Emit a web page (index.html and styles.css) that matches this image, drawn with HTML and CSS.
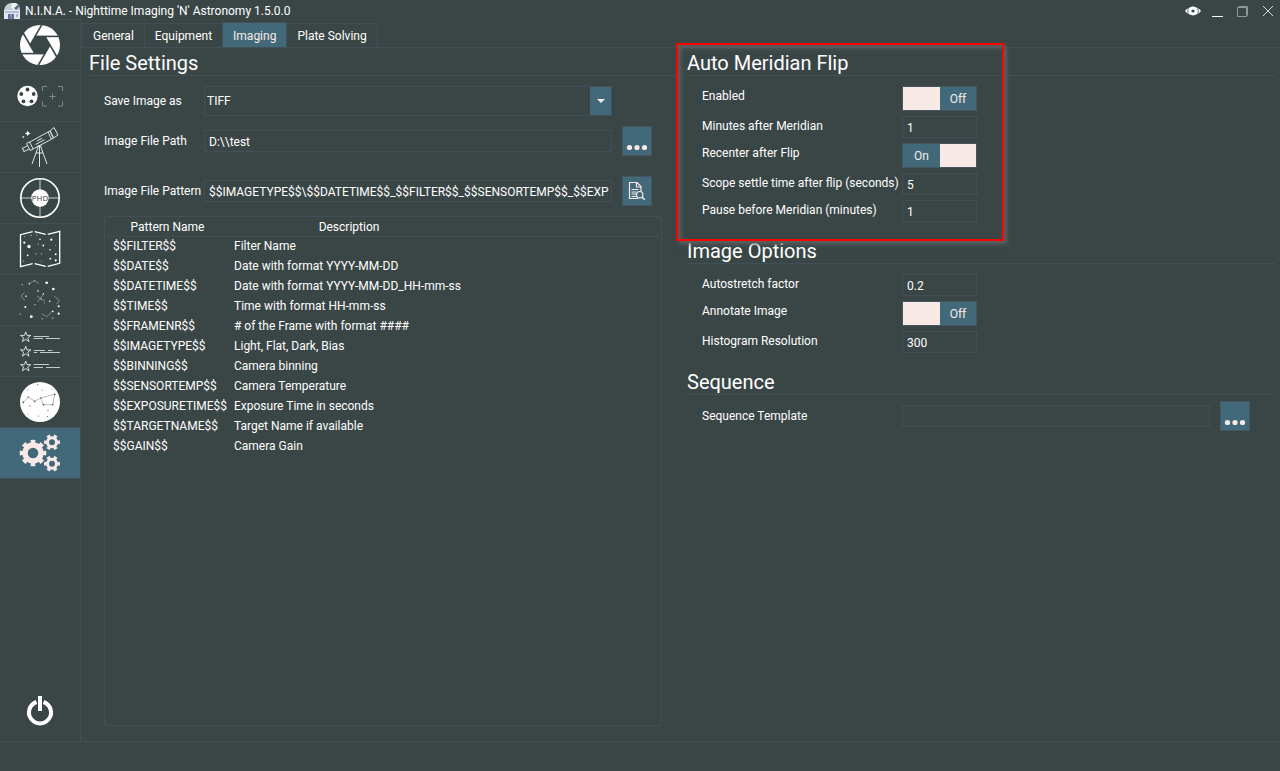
FILE: index.html
```html
<!DOCTYPE html>
<html lang="en">
<head>
<meta charset="utf-8">
<title>N.I.N.A. - Nighttime Imaging 'N' Astronomy 1.5.0.0</title>
<link rel="stylesheet" href="styles.css">
</head>
<body>
<header class="titlebar">
  <svg class="app-icon" viewBox="0 0 18 18" aria-hidden="true">
    <path d="M1 8Q2 2 8 1h5q4 2 4 7z" fill="#c3ced3"/>
    <path d="M9 1l4 0 3 4-5 3-3-3z" fill="#eef3f5"/>
    <path d="M11 6l5-4 1 2-4 4z" fill="#5b6f83"/>
    <path d="M1 8h16v10H1z" fill="#e6e5f2"/>
    <path d="M2 9h14v2H2z" fill="#b7bfd2"/>
    <path d="M5 12h6v6H5z" fill="#5e6f9c"/>
    <path d="M8 12v6" stroke="#9aa7ca"/>
    <path d="M13 12h2v3h-2z" fill="#a9b0d2"/>
  </svg>
  <h1 class="app-title">N.I.N.A. - Nighttime Imaging 'N' Astronomy 1.5.0.0</h1>
  <div class="window-buttons">
    <button class="window-button" aria-label="Toggle theme">
      <svg viewBox="0 0 16 16"><path d="M0 8q3-4 8-4t8 4q-3 4-8 4T0 8z" fill="#fff"/><circle cx="8" cy="8" r="4.4" fill="#fff"/><circle cx="8" cy="8" r="1.6" fill="#3a4646"/><path d="M3.4 5.4q-1.6 2.6 0 5.2M12.6 5.4q1.6 2.6 0 5.2" fill="none" stroke="#3a4646" stroke-width=".8"/></svg>
    </button>
    <button class="window-button" aria-label="Minimize">
      <svg viewBox="0 0 16 16"><path d="M2 13.500h11" stroke="#fff" fill="none"/></svg>
    </button>
    <button class="window-button" aria-label="Restore">
      <svg viewBox="0 0 16 16"><path d="M2.500 4.500h9v9h-9zM3.500 3.500h9v9" fill="none" stroke="#8f9898"/></svg>
    </button>
    <button class="window-button" aria-label="Close">
      <svg viewBox="0 0 16 16"><path d="M3 3l10 10M13 3L3 13" fill="none" stroke="#d4d8d8"/></svg>
    </button>
  </div>
</header>

<div class="shell">
  <nav class="sidebar" aria-label="Sections">
    <button class="side-item" aria-label="Camera">
      <svg viewBox="0 0 80 50">
        <defs><path id="blade" d="M-5-8.600H20" stroke="#3a4646" stroke-width="1.600"/></defs>
        <g transform="translate(40 25)">
          <circle r="20" fill="#fff"/>
          <path d="M-5-8.600H5L10 0 5 8.600H-5L-10 0z" fill="#3a4646"/>
          <use href="#blade"/><use href="#blade" transform="rotate(60)"/><use href="#blade" transform="rotate(120)"/>
          <use href="#blade" transform="rotate(180)"/><use href="#blade" transform="rotate(240)"/><use href="#blade" transform="rotate(300)"/>
        </g>
      </svg>
    </button>
    <button class="side-item" aria-label="Filter wheel and focuser">
      <svg viewBox="0 0 80 50">
        <circle cx="27.500" cy="25" r="10.200" fill="#fff"/>
        <g fill="#3a4646"><circle cx="27.500" cy="18.500" r="1.900"/><circle cx="33.700" cy="23" r="1.900"/><circle cx="31.500" cy="30.300" r="1.900"/><circle cx="23.500" cy="30.300" r="1.900"/><circle cx="21.300" cy="23" r="1.900"/></g>
        <path d="M42.500 20v-4.500h4.500M58 15.500h4.500V20M62.500 30.500V35H58M47 35h-4.500v-4.500M49.500 25.500h6M52.500 22.500v6" fill="none" stroke="#818b8b"/>
      </svg>
    </button>
    <button class="side-item" aria-label="Telescope">
      <svg viewBox="0 0 80 50">
        <g fill="none" stroke="#dfe3e3" stroke-width="1">
          <path d="M50 9l4-3.500 4 7.500-4.500 3zM48 10l2-1 3.500 7-2 1.200zM29 20.500L48 10M33 27l18.500-9.800M26.500 21.500l3-1.500 3.700 7-3 1.500zM22.500 26.500l5-3M24 29.500l5.200-2.500M22 25.500l2.300 4.500M37 19l5-2.700M35.500 22.500l9-4.800"/>
          <path d="M38.500 24L32 42M40.500 24L47 42M39.500 24v21M36 31h7M37.500 24h4"/>
        </g>
        <path d="M27.700 8.500l.9 2 2 .9-2 .9-.9 2-.9-2-2-.9 2-.9z" fill="#fff"/><circle cx="23.300" cy="15" r="1" fill="#cdd2d2"/>
      </svg>
    </button>
    <button class="side-item" aria-label="Guider">
      <svg viewBox="0 0 80 50">
        <path d="M20 25h40M40 5v40" stroke="#9aa3a3" stroke-width="1.500"/>
        <circle cx="40" cy="25" r="19.200" fill="none" stroke="#fff" stroke-width="1.600"/>
        <circle cx="40" cy="25" r="8.700" fill="#fff"/>
        <text class="phd" x="40" y="28" text-anchor="middle">PHD</text>
      </svg>
    </button>
    <button class="side-item" aria-label="Sky atlas">
      <svg viewBox="0 0 80 50">
        <path d="M32.700 7.600L20.500 10.700v32l12.200-3.100M34.700 7.600l11 2.800M47.700 10.400l12-3.100v32l-12 3.100M45.700 42.400l-11-2.800" fill="none" stroke="#fff" stroke-width="1.300"/>
        <g fill="#fff"><circle cx="24.300" cy="18.700" r="1.100"/><circle cx="29" cy="22.500" r="1.700"/><circle cx="51.300" cy="15.700" r="1.100"/><circle cx="40" cy="15.300" r=".8"/><circle cx="43.300" cy="21.500" r=".9"/><circle cx="50" cy="25.700" r=".8"/><circle cx="27.700" cy="31.300" r=".9"/><circle cx="55.700" cy="30.300" r="1"/><circle cx="55.700" cy="36.300" r="1.100"/><circle cx="50.300" cy="34.700" r=".9"/></g>
        <g fill="#9ba4a4"><circle cx="55.700" cy="21.300" r=".6"/><circle cx="31" cy="11.500" r=".8"/><circle cx="36.700" cy="11" r=".7"/><circle cx="36" cy="29.700" r=".7"/><circle cx="41.500" cy="29.700" r=".7"/><circle cx="41.500" cy="37" r=".6"/><circle cx="38.300" cy="20.300" r=".7"/><circle cx="23.500" cy="37.300" r=".7"/><circle cx="24.500" cy="12.500" r=".6"/></g>
      </svg>
    </button>
    <button class="side-item" aria-label="Framing">
      <svg viewBox="0 0 80 50">
        <path d="M29.300 8.700l5-3 5 3M24.300 17.700L21 21l4 4.700M36.700 21l8.300 5.300M43.300 19.700L37.300 27M54.300 21.300l5 4-2.600 4M41.700 38.700l5 3 5-4.700" fill="none" stroke="#8f9999" stroke-width=".8"/>
        <g fill="#fff"><circle cx="29.300" cy="8.700" r=".8"/><circle cx="46.700" cy="7.700" r="1.300"/><circle cx="53.300" cy="14" r="1.300"/><circle cx="38" cy="16" r=".8"/><circle cx="43.300" cy="19" r=".8"/><circle cx="26" cy="21.300" r=".8"/><circle cx="49.700" cy="26.300" r=".8"/><circle cx="25.300" cy="32" r="1"/><circle cx="58.700" cy="31.200" r="1"/><circle cx="58.700" cy="38.700" r="1.100"/><circle cx="52.700" cy="36.300" r=".9"/><circle cx="31.300" cy="41.700" r="1.400"/></g>
        <g fill="#a9b1b1"><circle cx="22.300" cy="9.700" r=".7"/><circle cx="35" cy="29.700" r=".8"/><circle cx="20.300" cy="39.300" r=".7"/><circle cx="52.700" cy="43.300" r=".8"/><circle cx="42.300" cy="43.700" r=".7"/><circle cx="34.500" cy="5.700" r=".7"/><circle cx="41" cy="24" r=".8"/><circle cx="44.500" cy="28" r=".6"/></g>
      </svg>
    </button>
    <button class="side-item" aria-label="Sequence">
      <svg viewBox="0 0 80 50">
        <defs><path id="star" d="M0-5.200L1.300-1.600H5.200L2.100.7 3.300 4.600 0 2.300-3.300 4.600-2.100.7-5.200-1.600h3.900z" fill="none" stroke="#e6e9e9" stroke-width=".9"/></defs>
        <use href="#star" x="25.700" y="11"/><use href="#star" x="25.700" y="25.500"/><use href="#star" x="25.700" y="40.200"/>
        <path d="M33.700 10.500H49M33.700 12.500H43M46 12.500H60M33.700 24.500H45M48 24.500h4.500M33.700 26.500h3.500M40 26.500H60M33.700 38.500H49M33.700 41.500H43M46 41.500H60" stroke="#d5dada" stroke-width=".9"/>
      </svg>
    </button>
    <button class="side-item" aria-label="Sky">
      <svg viewBox="0 0 80 50">
        <circle cx="40" cy="25" r="20" fill="#fff"/>
        <path d="M23.300 25.300l5-5.300 6.400 4.300 6-3.300 14-3.700-2 10.400h-9.400l-2.600-6.700" fill="none" stroke="#9aa0a0" stroke-width=".7"/>
        <g fill="#5a6464"><circle cx="23.300" cy="25.300" r=".9"/><circle cx="28.300" cy="20" r=".7"/><circle cx="34.700" cy="24.300" r=".9"/><circle cx="40.700" cy="21" r=".8"/><circle cx="54.700" cy="17.300" r=".9"/><circle cx="52.700" cy="27.700" r=".8"/><circle cx="43.500" cy="27.700" r=".9"/><circle cx="37.700" cy="7.700" r=".6"/><circle cx="38.300" cy="39" r=".6"/><circle cx="47.500" cy="39.500" r=".6"/></g>
        <g fill="#adb3b3"><circle cx="27.500" cy="13" r=".7"/><circle cx="42.500" cy="13.300" r=".8"/><circle cx="30" cy="29" r=".9"/><circle cx="48" cy="33.500" r=".9"/><circle cx="28" cy="37.300" r=".7"/><circle cx="52" cy="12.500" r=".6"/></g>
      </svg>
    </button>
    <button class="side-item side-item-active" aria-label="Options" aria-current="page">
      <svg viewBox="0 0 80 50">
        <g fill="none" stroke="#f8e9e7">
          <circle cx="33" cy="25" r="8" stroke-width="5.400"/>
          <circle cx="33" cy="25" r="11.500" stroke-width="3.600" pathLength="80" stroke-dasharray="5 5" stroke-dashoffset="2.500"/>
          <circle cx="52" cy="14.300" r="4.500" stroke-width="3"/>
          <circle cx="52" cy="14.300" r="6.600" stroke-width="2.800" pathLength="60" stroke-dasharray="5 5" stroke-dashoffset="2.500"/>
          <circle cx="52" cy="35.700" r="4.500" stroke-width="3"/>
          <circle cx="52" cy="35.700" r="6.600" stroke-width="2.800" pathLength="60" stroke-dasharray="5 5" stroke-dashoffset="2.500"/>
        </g>
      </svg>
    </button>
    <button class="power" aria-label="Exit">
      <svg viewBox="0 0 80 50">
        <path d="M36.500 15a11 11 0 1 0 7 0" fill="none" stroke="#fff" stroke-width="4"/>
        <path d="M40 9v15" stroke="#fff" stroke-width="4"/>
      </svg>
    </button>
  </nav>

  <main class="main">
    <div class="tabs" role="tablist">
      <button class="tab" role="tab">General</button>
      <button class="tab" role="tab">Equipment</button>
      <button class="tab tab-active" role="tab" aria-selected="true">Imaging</button>
      <button class="tab" role="tab">Plate Solving</button>
    </div>

    <div class="columns">
      <section class="column">
        <h2 class="heading">File Settings</h2>
        <div class="file-settings">
          <div class="file-row">
            <label for="save-as">Save Image as</label>
            <div class="combo">
              <select id="save-as"><option>TIFF</option><option>FITS</option><option>XISF</option></select>
              <span class="combo-arrow" aria-hidden="true"></span>
            </div>
          </div>
          <div class="file-row">
            <label for="file-path">Image File Path</label>
            <input class="field" id="file-path" type="text" value="D:\\test">
            <button class="icon-button" aria-label="Browse image path">
              <svg viewBox="0 0 28 28"><g fill="#f8e9e7"><circle cx="6.500" cy="20.500" r="2.600"/><circle cx="14" cy="20.500" r="2.600"/><circle cx="21.500" cy="20.500" r="2.600"/></g></svg>
            </button>
          </div>
          <div class="file-row file-row-spaced">
            <label for="file-pattern">Image File Pattern</label>
            <input class="field" id="file-pattern" type="text" value="$$IMAGETYPE$$\$$DATETIME$$_$$FILTER$$_$$SENSORTEMP$$_$$EXPOSURETIME$$">
            <button class="icon-button" aria-label="Preview pattern">
              <svg viewBox="0 0 28 28"><path d="M15 21.500H6.500v-16h7.500l4 4v5M13.500 5.500v4.500H18M8.500 12.500h7M8.500 15h5M8.500 17h4.500M8.500 19.500h5" fill="none" stroke="#f8e9e7" stroke-width="1.200"/><circle cx="16.700" cy="17.700" r="3.200" fill="none" stroke="#f8e9e7" stroke-width="1.200"/><path d="M19 20l2.800 2.800" stroke="#f8e9e7" stroke-width="1.600"/></svg>
            </button>
          </div>
          <div class="pattern-box">
            <table class="patterns">
              <colgroup><col class="col-name"><col class="col-desc"><col></colgroup>
              <thead><tr><th>Pattern Name</th><th>Description</th><td></td></tr></thead>
              <tbody>
                <tr><td>$$FILTER$$</td><td>Filter Name</td></tr>
                <tr><td>$$DATE$$</td><td>Date with format YYYY-MM-DD</td></tr>
                <tr><td>$$DATETIME$$</td><td>Date with format YYYY-MM-DD_HH-mm-ss</td></tr>
                <tr><td>$$TIME$$</td><td>Time with format HH-mm-ss</td></tr>
                <tr><td>$$FRAMENR$$</td><td># of the Frame with format ####</td></tr>
                <tr><td>$$IMAGETYPE$$</td><td>Light, Flat, Dark, Bias</td></tr>
                <tr><td>$$BINNING$$</td><td>Camera binning</td></tr>
                <tr><td>$$SENSORTEMP$$</td><td>Camera Temperature</td></tr>
                <tr><td>$$EXPOSURETIME$$</td><td>Exposure Time in seconds</td></tr>
                <tr><td>$$TARGETNAME$$</td><td>Target Name if available</td></tr>
                <tr><td>$$GAIN$$</td><td>Camera Gain</td></tr>
              </tbody>
            </table>
          </div>
        </div>
      </section>

      <div class="column">
        <section class="group highlighted">
          <h2 class="heading">Auto Meridian Flip</h2>
          <div class="options">
            <label for="flip-enabled">Enabled</label>
            <span class="toggle"><input id="flip-enabled" type="checkbox"><span class="toggle-text">Off</span></span>
            <label for="minutes-after">Minutes after Meridian</label>
            <input class="field" id="minutes-after" type="text" value="1">
            <label for="recenter">Recenter after Flip</label>
            <span class="toggle toggle-on"><input id="recenter" type="checkbox" checked><span class="toggle-text">On</span></span>
            <label for="settle">Scope settle time after flip (seconds)</label>
            <input class="field" id="settle" type="text" value="5">
            <label for="pause">Pause before Meridian (minutes)</label>
            <input class="field" id="pause" type="text" value="1">
          </div>
        </section>
        <section class="group">
          <h2 class="heading">Image Options</h2>
          <div class="options">
            <label for="stretch">Autostretch factor</label>
            <input class="field" id="stretch" type="text" value="0.2">
            <label for="annotate">Annotate Image</label>
            <span class="toggle"><input id="annotate" type="checkbox"><span class="toggle-text">Off</span></span>
            <label for="histogram">Histogram Resolution</label>
            <input class="field" id="histogram" type="text" value="300">
          </div>
        </section>
        <section class="group">
          <h2 class="heading">Sequence</h2>
          <div class="template-row">
            <label for="template">Sequence Template</label>
            <input class="field" id="template" type="text" value="">
            <button class="icon-button" aria-label="Browse template">
              <svg viewBox="0 0 28 28"><g fill="#f8e9e7"><circle cx="6.500" cy="20.500" r="2.600"/><circle cx="14" cy="20.500" r="2.600"/><circle cx="21.500" cy="20.500" r="2.600"/></g></svg>
            </button>
          </div>
        </section>
      </div>
    </div>
  </main>
</div>
<footer class="statusbar"></footer>
</body>
</html>
```
FILE: styles.css
```css
:root {
  --bg: #3a4646;
  --line: #434f58;
  --accent: #42697a;
  --soft: #f8e9e7;
}

*, ::before, ::after { box-sizing: border-box; }

body {
  margin: 0;
  min-height: 100vh;
  display: flex;
  flex-direction: column;
  background: var(--bg);
  color: #fff;
  font-family: "Segoe UI", Roboto, "Open Sans", sans-serif;
  font-size: 12px;
  line-height: 16px;
}

button, input, select {
  font: inherit;
  color: inherit;
  margin: 0;
  padding: 0;
  border: 0;
  border-radius: 0;
  background: none;
}

svg { display: block; }

.titlebar {
  display: flex;
  align-items: center;
  gap: 4px;
  height: 19px;
  padding: 2px 4px 0 3px;
}

.app-icon { width: 18px; height: 18px; }

.app-title {
  flex: 1;
  margin: 0;
  font-size: 12px;
  font-weight: 400;
}

.window-buttons { display: flex; gap: 9px; }
.window-button, .window-button svg { width: 16px; height: 16px; }

.shell { flex: 1; display: flex; }

.sidebar {
  width: 81px;
  display: flex;
  flex-direction: column;
  border-top: 1px solid var(--line);
  border-right: 1px solid var(--line);
}

.side-item { border-bottom: 1px solid var(--line); }
.side-item svg, .power svg { width: 80px; height: 50px; }
.side-item-active { background: var(--accent); }
.power { margin: auto 0 4px; }

.phd {
  font-family: "Open Sans", sans-serif;
  font-size: 8px;
  fill: #3a4646;
}

.main {
  flex: 1;
  min-width: 0;
  display: flex;
  flex-direction: column;
}

.tabs {
  display: flex;
  align-items: flex-end;
  height: 29px;
  padding-left: 1px;
  border-bottom: 1px solid var(--line);
}

.tab {
  height: 24px;
  padding: 1px 10px 0;
  border: 1px solid var(--line);
  border-width: 1px 1px 0;
}

.tab + .tab { border-left: 0; }

.tab-active {
  height: 25px;
  background: var(--accent);
  color: var(--soft);
}

.columns {
  flex: 1;
  display: grid;
  grid-template-columns: 1fr 1fr;
  gap: 10px;
  padding: 0 5px 15px 8px;
}

.column {
  min-width: 0;
  display: flex;
  flex-direction: column;
}

.heading {
  margin: 0;
  height: 28px;
  border-bottom: 1px solid var(--line);
  font-size: 20px;
  font-weight: 400;
  line-height: 30px;
}

.file-settings {
  flex: 1;
  display: flex;
  flex-direction: column;
  gap: 10px;
  padding: 10px 15px 0;
}

.file-row {
  display: grid;
  grid-template-columns: 100px 1fr 30px;
  column-gap: 10px;
  align-items: center;
  min-height: 30px;
  padding-right: 10px;
}

.file-row label { margin-right: -10px; white-space: nowrap; }
.file-row .field, .combo { margin-left: -10px; }
.file-row-spaced { margin-top: 10px; }

.field {
  min-width: 0;
  height: 22px;
  padding: 1px 2px 0 4px;
  border: 1px solid var(--line);
}

.combo {
  display: flex;
  height: 30px;
  border: 1px solid var(--line);
}

.combo select {
  flex: 1;
  min-width: 0;
  padding-left: 2px;
  appearance: none;
}

.combo-arrow {
  width: 21px;
  display: grid;
  place-items: center;
  background: var(--accent);
}

.combo-arrow::before {
  content: "";
  border: 4px solid transparent;
  border-top-color: var(--soft);
  border-bottom: 0;
}

.icon-button {
  width: 30px;
  height: 30px;
  border: 1px solid #46565f;
  background: var(--accent);
}

.pattern-box {
  flex: 1;
  padding: 1px 2px;
  border: 1px solid var(--line);
  border-radius: 3px;
}

.patterns {
  width: 100%;
  table-layout: fixed;
  border-collapse: collapse;
}

.col-name { width: 121px; }
.col-desc { width: 242px; }

.patterns th {
  padding: 0;
  font-weight: 400;
  text-align: center;
}

.patterns thead th, .patterns thead td {
  height: 18px;
  border-bottom: 1px solid var(--line);
}

.patterns tbody td {
  height: 20px;
  padding: 0 0 0 6px;
  white-space: nowrap;
}

.group { padding-bottom: 14px; }
.highlighted { position: relative; }

.highlighted::after {
  content: "";
  position: absolute;
  top: -5px;
  left: -11px;
  width: 328px;
  height: 198px;
  border: 2px solid #f00;
  box-shadow: 3px 3px 4px #5d6161, inset 3px 3px 4px #5d6161;
  pointer-events: none;
}

.options {
  display: grid;
  grid-template-columns: 200px 75px;
  row-gap: 5px;
  padding: 10px 15px 0;
}

.options label { white-space: nowrap; padding-top: 2px; }

.toggle {
  display: grid;
  grid-template-columns: 37px 36px;
  height: 25px;
  border: 1px solid #46565f;
  background: var(--accent);
  color: var(--soft);
}

.toggle input {
  grid-row: 1;
  grid-column: 1;
  appearance: none;
  background: var(--soft);
}

.toggle-text {
  grid-row: 1;
  grid-column: 2;
  place-self: center;
}

.toggle-on input { grid-column: 2; }
.toggle-on .toggle-text { grid-column: 1; }

.template-row {
  display: grid;
  grid-template-columns: 200px 1fr 40px;
  align-items: center;
  padding: 6px 25px 0 15px;
}

.template-row .icon-button { margin-left: 10px; }

.statusbar {
  height: 30px;
  border-top: 1px solid var(--line);
}
```
